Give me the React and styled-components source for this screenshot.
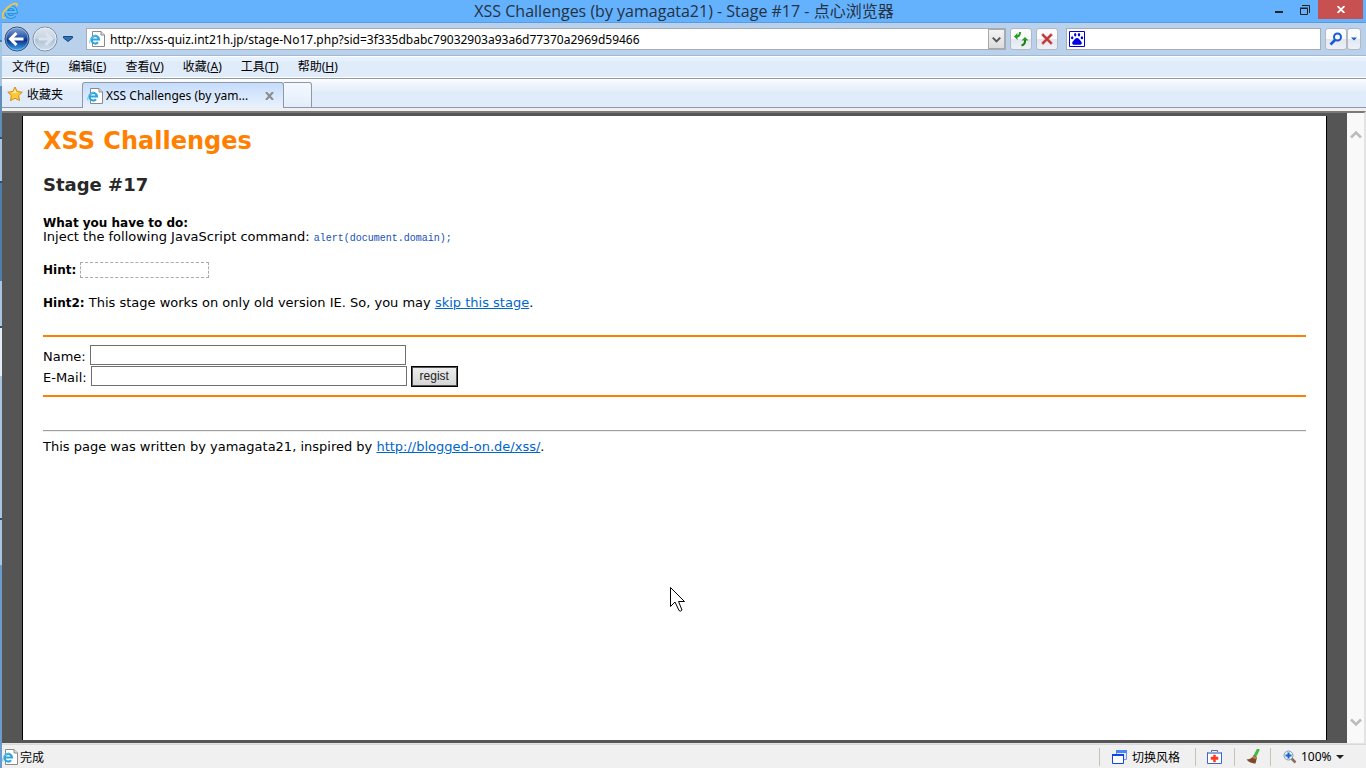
import React, { useState } from 'react';
import styled, { createGlobalStyle } from 'styled-components';

const GlobalStyle = createGlobalStyle`
  * {
    box-sizing: border-box;
  }

  body {
    margin: 0;
    font-family: "Noto Sans", "Noto Sans CJK SC", sans-serif;
    font-size: 12px;
    color: #000;
  }

  button, input {
    font-family: inherit;
    font-size: inherit;
    margin: 0;
    padding: 0;
  }

  svg {
    display: block;
    flex: none;
  }
`;

const Desktop = styled.div`
  display: grid;
  grid-template-columns: 2px 1fr;
  min-height: 100vh;
  background: #f0f0f0;
`;

const DesktopEdge = styled.div`
  background: linear-gradient(
    #64b1fd 0 40px, #4f7ba3 40px 42px, #a9c6e0 42px 86px, #5f8fb8 86px 137px,
    #31506e 137px 139px, #a9c6e0 139px 181px, #31506e 181px 183px,
    #4d7da8 183px 281px, #a9c6e0 281px 326px, #31506e 326px 328px,
    #e4edf5 328px 376px, #a9c6e0 376px 518px, #31506e 518px 520px,
    #a9c6e0 520px 565px, #6a9ccb 565px
  );
`;

const Window = styled.div`
  display: flex;
  flex-direction: column;
  min-width: 0;
`;

const TitleBar = styled.header`
  display: grid;
  grid-template-columns: 112px 1fr 112px;
  height: 23px;
  background: #64b1fd;
  border-bottom: 1px solid #5a9be0;
`;

const Title = styled.h1`
  margin: 0;
  font-family: "Open Sans", "Noto Sans CJK SC", sans-serif;
  font-size: 16px;
  font-weight: 400;
  line-height: 22px;
  text-align: center;
  color: #26323d;
  white-space: nowrap;
`;

const WindowButtons = styled.div`
  display: flex;
  align-items: flex-start;
  justify-content: flex-end;
  padding-right: 3px;
`;

const WindowButton = styled.button`
  display: flex;
  align-items: center;
  justify-content: center;
  width: ${props => props.$close ? '45px' : '26px'};
  height: 19px;
  border: 0;
  background: ${props => props.$close ? '#c75050' : 'transparent'};
`;

const NavBar = styled.div`
  display: flex;
  align-items: center;
  height: 33px;
  padding: 0 5px 0 2px;
  background: #b9d1ea;
  border-bottom: 1px solid #a3b9d1;
`;

const IconButton = styled.button`
  display: flex;
  align-items: center;
  justify-content: center;
  padding: 0;
  border: 0;
  background: transparent;
`;

const HistoryGroup = styled.div`
  display: flex;
  gap: 2px;
  align-items: center;
`;

const HistoryButton = styled(IconButton)`
  width: 16px;
  height: 24px;
  margin: 0 10px 0 2px;
`;

const FieldBox = styled.div`
  display: flex;
  align-items: center;
  height: 22px;
  min-width: 0;
  flex: ${props => props.$grow ? '1' : '0 0 255px'};
  background: #fff;
  border: 1px solid #a5acb5;
  padding-left: 2px;
`;

const FieldInput = styled.input`
  flex: 1;
  min-width: 0;
  height: 20px;
  margin-left: 5px;
  border: 0;
  outline: 0;
  background: transparent;
  font-size: 12px;
`;

const DropButton = styled(IconButton)`
  width: 17px;
  height: 20px;
  border: 1px solid #a9a9a9;
  background: linear-gradient(#f3f3f3, #dcdcdc);
`;

const ToolButton = styled(IconButton)`
  width: ${props => props.$narrow ? '14px' : '22px'};
  height: 22px;
  border: 1px solid #b3b8c2;
  border-radius: 3px;
  background: linear-gradient(#fafbfd 0 50%, #e1e6f0 50%, #eef1f7);
`;

const ToolGroup = styled.div`
  display: flex;
  gap: 4px;
  margin: 0 8px 0 4px;
`;

const SearchGroup = styled.div`
  display: flex;
  margin-left: 4px;
`;

const MenuBar = styled.nav`
  display: flex;
  gap: 19px;
  align-items: center;
  height: 23px;
  padding: 0 10px;
  background: linear-gradient(#fff 0 1px, #e6f2ff 1px 5px, #e0ecf9 5px 21px, #fff 21px);
  border-bottom: 1px solid #8f98a6;
`;

const MenuItem = styled.button`
  border: 0;
  background: transparent;
  line-height: 20px;
  white-space: nowrap;
`;

const TabRow = styled.div`
  display: flex;
  height: 29px;
  background: linear-gradient(#fff, #f1f6fe 4px, #e6eefa 12px, #e0ecf9 13px);
`;

const Favorites = styled.button`
  display: flex;
  align-items: center;
  gap: 4px;
  width: 80px;
  padding: 2px 0 0 5px;
  border: 0;
  border-bottom: 1px solid #8f98a6;
  background: transparent;
`;

const Tab = styled.div`
  display: flex;
  align-items: center;
  width: 202px;
  height: 26px;
  margin-top: 3px;
  padding: 0 9px 0 4px;
  border: 1px solid #8f98a6;
  border-bottom: 0;
  border-radius: 3px 3px 0 0;
  background: linear-gradient(#c5dcfb, #e6f0fd 90%);
`;

const TabTitle = styled.span`
  flex: 1;
  margin-left: 3px;
  overflow: hidden;
  text-overflow: ellipsis;
  white-space: nowrap;
`;

const NewTab = styled.button`
  width: 28px;
  height: 26px;
  margin-top: 3px;
  border: 1px solid #8f98a6;
  border-left: 0;
  border-radius: 0 3px 0 0;
  background: linear-gradient(#f4f8fe, #e3eefa);
`;

const TabRest = styled.div`
  flex: 1;
  border-bottom: 1px solid #8f98a6;
`;

const Viewport = styled.div`
  display: flex;
  flex: 1;
  margin-top: 3px;
  border-top: 2px solid #7a7a7a;
  border-right: 2px solid #e3e3e3;
  border-bottom: 1px solid #e3e3e3;
`;

const Backdrop = styled.div`
  flex: 1;
  display: flex;
  min-width: 0;
  padding: 3px 20px;
  background: #555;
`;

const Page = styled.main`
  flex: 1;
  min-width: 0;
  padding: 10px 20px;
  background: #fff;
  border: solid #000;
  border-width: 0 1px;
  font-family: "DejaVu Sans", sans-serif;
  font-size: 13px;
  line-height: 14px;
`;

const SiteTitle = styled.h1`
  margin: 0 0 16px;
  font-size: 24px;
  line-height: 30px;
  color: #ff8000;
`;

const StageTitle = styled.h2`
  margin: 0 0 18px;
  font-size: 18px;
  line-height: 26px;
  color: #282828;
`;

const Paragraph = styled.p`
  margin: 0 0 ${props => props.$last ? '25px' : '19px'};
`;

const Strong = styled.b`
  font-size: 12px;
`;

const Command = styled.span`
  font-family: "Liberation Mono", monospace;
  font-size: 10px;
  line-height: 10px;
  color: #1450b4;
`;

const HintBox = styled.span`
  display: inline-block;
  width: 129px;
  height: 16px;
  margin: -1px 0;
  border: 1px dashed #aaa;
  vertical-align: top;
`;

const Link = styled.a`
  color: #0066cc;
`;

const FormRule = styled.hr`
  margin: 0;
  border: 0;
  border-top: 2px solid #ff8000;
`;

const Form = styled.form`
  padding: 8px 0;
`;

const FormRow = styled.div`
  display: flex;
  align-items: center;
  gap: 4px;
  height: ${props => props.$first ? '20px' : '22px'};
`;

const Label = styled.label`
  padding-top: 3px;
`;

const TextField = styled.input`
  width: 316px;
  height: 20px;
  border: 1px solid #6f6f6f;
  padding: 0 3px;
  background: #fff;
`;

const SubmitButton = styled.button`
  width: 47px;
  height: 21px;
  border: 1px solid #000;
  box-shadow: inset 0 0 0 1px #555;
  background: linear-gradient(#eee, #d5d5d5);
  font-family: "Liberation Sans", sans-serif;
  font-size: 12px;
  line-height: 14px;
  color: #222;
`;

const FooterRule = styled.hr`
  margin: 33px 0 8px;
  border: 0;
  border-top: 1px solid #a0a0a0;
  border-bottom: 1px solid #eee;
`;

const ScrollBar = styled.div`
  display: flex;
  flex-direction: column;
  justify-content: space-between;
  width: 17px;
  padding: 13px 0;
  background: #f9f9f9;
`;

const ScrollButton = styled(IconButton)`
  width: 17px;
  height: 17px;
`;

const StatusBar = styled.footer`
  display: flex;
  align-items: center;
  height: 24px;
  border-top: 1px solid #d9d9d9;
  background: #f0f0f0;
`;

const StatusText = styled.div`
  display: flex;
  align-items: center;
  gap: 2px;
  flex: 1;
`;

const StatusItem = styled.button`
  display: flex;
  align-items: center;
  justify-content: ${props => props.$start ? 'flex-start' : 'center'};
  gap: 4px;
  width: ${props => props.$width};
  height: 18px;
  padding: 0 ${props => props.$start ? '12px' : '0'};
  border: 0;
  border-left: 1px solid #c8c4b4;
  background: transparent;
  white-space: nowrap;
`;

const Pointer = styled.svg`
  position: absolute;
  left: 670px;
  top: 587px;
  pointer-events: none;
`;

const IePageIcon = () => (
  <svg width="16" height="16" viewBox="0 0 16 16" fill="none">
    <path d="M3.5 .5h8.5l3.5 3.5v11.5h-12z" fill="#fff" stroke="#8a8a8a" />
    <path d="M12 .5v3.5h3.5" fill="#ddd" stroke="#8a8a8a" />
    <path d="M2.5 8.5h7.5a3.8 3.8 0 1 0-1 2.8" stroke="#2fa5dc" strokeWidth="2.2" />
    <path d="M1 12.5C-.5 10 3 5 7 4" stroke="#67c5eb" />
  </svg>
);

const IeIcon = () => (
  <svg width="17" height="20" viewBox="0 0 17 20" fill="none">
    <path d="M4.500 12h9.500a5 5 0 1 0-1.200 3.300" stroke="#1688d6" strokeWidth="3.4" />
    <path d="M4.500 12h9.500a5 5 0 1 0-1.200 3.300" stroke="#68bdf6" strokeWidth="1.8" />
    <path d="M3.500 18C-1 19-.4 13 5 8S16.500 2 14.500 6" stroke="#f3c64b" strokeWidth="1.8" />
  </svg>
);

const BackIcon = () => (
  <svg width="26" height="26" viewBox="0 0 26 26">
    <defs>
      <linearGradient id="back" x2="0" y2="1">
        <stop stopColor="#8aa8d8" />
        <stop offset=".4" stopColor="#2f5cae" />
        <stop offset=".55" stopColor="#0a2f86" />
        <stop offset="1" stopColor="#3fb0fa" />
      </linearGradient>
    </defs>
    <circle cx="13" cy="13" r="12" fill="url(#back)" stroke="#35527e" />
    <circle cx="13" cy="13" r="11" fill="none" stroke="#b9d4f2" strokeOpacity=".5" />
    <path d="M12.500 7 6.500 13l6 6M7.500 13h12" fill="none" stroke="#fff" strokeWidth="3" />
  </svg>
);

const ForwardIcon = () => (
  <svg width="26" height="26" viewBox="0 0 26 26">
    <defs>
      <linearGradient id="forward" x2="0" y2="1">
        <stop stopColor="#dfe8f2" />
        <stop offset=".48" stopColor="#c6d3e2" />
        <stop offset=".52" stopColor="#b0c2d6" />
        <stop offset="1" stopColor="#d2e0ef" />
      </linearGradient>
    </defs>
    <circle cx="13" cy="13" r="12" fill="url(#forward)" stroke="#7e8b9c" />
    <circle cx="13" cy="13" r="11" fill="none" stroke="#e6eef7" />
    <path d="m13.500 7 6 6-6 6M18.500 13h-12" fill="none" stroke="#dbe4ee" strokeWidth="3" />
  </svg>
);

const StarIcon = () => (
  <svg width="16" height="16" viewBox="0 0 16 16">
    <path
      d="m8 1 2.200 4.500 5 .7-3.600 3.400.9 5L8 12.200l-4.500 2.400.9-5L.8 6.200l5-.7z"
      fill="#ffc935" stroke="#d58a14" strokeLinejoin="round"
    />
    <path d="m8 3 1.300 3.500 3 .5H4l2.500-.7z" fill="#fff0a8" />
  </svg>
);

const PawIcon = () => (
  <svg width="16" height="16" viewBox="0 0 16 16" fill="#0000e6">
    <path d="M.5.5h15v15H.5z" fill="#fff" stroke="#0000e6" />
    <ellipse cx="6.200" cy="3.800" rx="1.200" ry="1.700" />
    <ellipse cx="10" cy="3.800" rx="1.200" ry="1.700" />
    <ellipse cx="3.200" cy="6.800" rx="1.200" ry="1.500" />
    <ellipse cx="12.900" cy="6.800" rx="1.200" ry="1.500" />
    <path d="M8 7c2 0 2.200 1.500 3.500 2.800 2 1.700 1.500 4-.5 4H5c-2 0-2.500-2.300-.5-4C5.800 8.500 6 7 8 7z" />
  </svg>
);

const RefreshIcon = () => (
  <svg width="16" height="16" viewBox="0 0 16 16">
    <g fill="#2a9a1e">
      <path d="M1 5.500 4.500 2v7z" />
      <path d="M8.500 8.500h7L12 5z" transform="translate(0 1)" />
    </g>
    <path d="M3.500 5.500Q7 5.500 7 1" fill="none" stroke="#2a9a1e" strokeWidth="2" transform="translate(0 0)" />
    <path d="M12 9v1.500q0 3-3.500 4" fill="none" stroke="#1c7f14" strokeWidth="2" />
  </svg>
);

const StopIcon = () => (
  <svg width="12" height="12" viewBox="0 0 12 12" fill="none">
    <path d="m1 1 10 10M11 1 1 11" stroke="#e08a8a" strokeWidth="3" />
    <path d="m1.500 1.500 9 9M10.500 1.500l-9 9" stroke="#bf3434" strokeWidth="1.800" />
  </svg>
);

const SearchIcon = () => (
  <svg width="14" height="14" viewBox="0 0 14 14" fill="none" stroke="#1c5ad2">
    <circle cx="8.500" cy="5" r="3.500" strokeWidth="2" />
    <path d="m6 8-4.500 4.500" strokeWidth="2.600" />
  </svg>
);

const Triangle = ({ color, width = 8 }) => (
  <svg width={width} height="4" viewBox="0 0 8 4">
    <path d="M0 0h8L4 4z" fill={color} />
  </svg>
);

const Chevron = ({ up, color = '#bcbcbc', size = 12 }) => (
  <svg width={size} height={size} viewBox="0 0 12 12" fill="none">
    <path d={up ? 'm1 8.500 5-5 5 5' : 'm1 3.500 5 5 5-5'} stroke={color} strokeWidth="2.600" />
  </svg>
);

const StyleIcon = () => (
  <svg width="16" height="14" viewBox="0 0 16 14">
    <path d="M4.500.5h10v9h-10z" fill="#dfe9ff" stroke="#6f96ea" />
    <path d="M4 0h11v3H4z" fill="#4b86f2" />
    <path d="M.5 4.500h11v9H.5z" fill="#fff" stroke="#1544e0" />
    <path d="M0 4h12v2H0z" fill="#1544e0" />
  </svg>
);

const AidIcon = () => (
  <svg width="16" height="14" viewBox="0 0 16 14">
    <path d="M4.500 2V.5h6V2" fill="none" stroke="#5a6b94" />
    <path d="M.5 2.500h14v11H.5z" fill="#fff" stroke="#3c66cc" />
    <path d="M1 2h13v2H1z" fill="#8ca6d8" />
    <path d="M6.500 5h2v2h2.500v2.500H8.500V12h-2V9.500H4V7h2.500z" fill="#ff3a1c" stroke="#ff3a1c" strokeWidth=".5" />
  </svg>
);

const BroomIcon = () => (
  <svg width="14" height="15" viewBox="0 0 14 15">
    <path d="m12 1-3 6" stroke="#3fbb3f" strokeWidth="3" strokeLinecap="round" />
    <path d="M8 6 11 8.500 9.500 14.500C6 14.500 2.500 13 .5 10.500 3 10.500 6.500 9 8 6z" fill="#7d4a2a" />
    <path d="m7.500 6.500 3.500 2-.5 2L6 8.500z" fill="#b7885e" />
  </svg>
);

const ZoomIcon = () => (
  <svg width="14" height="14" viewBox="0 0 14 14" fill="none">
    <path d="m8 8 4.500 4.500" stroke="#8c6b58" strokeWidth="2.500" />
    <circle cx="5.500" cy="5.500" r="4.500" fill="#e3f1ff" stroke="#8198b5" />
    <path d="M5.500 2.500v6M2.500 5.500h6" stroke="#1b63c4" strokeWidth="2" />
  </svg>
);

const menus = [
  { label: '文件', hotkey: 'F' },
  { label: '编辑', hotkey: 'E' },
  { label: '查看', hotkey: 'V' },
  { label: '收藏', hotkey: 'A' },
  { label: '工具', hotkey: 'T' },
  { label: '帮助', hotkey: 'H' },
];

const BrowserBar = () => {
  const [url, setUrl] = useState('http://xss-quiz.int21h.jp/stage-No17.php?sid=3f335dbabc79032903a93a6d77370a2969d59466');

  return (
    <NavBar>
      <HistoryGroup>
        <IconButton aria-label="Back"><BackIcon /></IconButton>
        <IconButton aria-label="Forward"><ForwardIcon /></IconButton>
      </HistoryGroup>
      <HistoryButton aria-label="History">
        <svg width="10" height="6" viewBox="0 0 10 6">
          <path d="M.5.5h9V2L5 5.500.5 2z" fill="#2e75b5" stroke="#1c4a80" />
        </svg>
      </HistoryButton>
      <FieldBox $grow>
        <IePageIcon />
        <FieldInput aria-label="Address" value={url} onChange={(e) => setUrl(e.target.value)} />
        <DropButton aria-label="Addresses"><Chevron color="#555" size={9} /></DropButton>
      </FieldBox>
      <ToolGroup>
        <ToolButton aria-label="Refresh"><RefreshIcon /></ToolButton>
        <ToolButton aria-label="Stop"><StopIcon /></ToolButton>
      </ToolGroup>
      <FieldBox>
        <PawIcon />
        <FieldInput aria-label="Search" />
      </FieldBox>
      <SearchGroup>
        <ToolButton aria-label="Go"><SearchIcon /></ToolButton>
        <ToolButton $narrow aria-label="Search options"><Triangle color="#1c5ad2" width={6} /></ToolButton>
      </SearchGroup>
    </NavBar>
  );
};

const StagePage = () => (
  <Page>
    <SiteTitle>XSS Challenges</SiteTitle>
    <StageTitle>Stage #17</StageTitle>
    <Paragraph>
      <Strong>What you have to do:</Strong><br />
      Inject the following JavaScript command: <Command>alert(document.domain);</Command>
    </Paragraph>
    <Paragraph><Strong>Hint:</Strong> <HintBox /></Paragraph>
    <Paragraph $last>
      <Strong>Hint2:</Strong> This stage works on only old version IE. So, you may <Link href="#skip">skip this stage</Link>.
    </Paragraph>
    <FormRule />
    <Form onSubmit={(e) => e.preventDefault()}>
      <FormRow $first>
        <Label htmlFor="name">Name:</Label>
        <TextField id="name" type="text" />
      </FormRow>
      <FormRow>
        <Label htmlFor="email">E-Mail:</Label>
        <TextField id="email" type="text" />
        <SubmitButton type="submit">regist</SubmitButton>
      </FormRow>
    </Form>
    <FormRule />
    <FooterRule />
    This page was written by yamagata21, inspired by <Link href="#xss">http://blogged-on.de/xss/</Link>.
  </Page>
);

const App = () => (
  <>
    <GlobalStyle />
    <Desktop>
      <DesktopEdge />
      <Window>
        <TitleBar>
          <IeIcon />
          <Title>XSS Challenges (by yamagata21) - Stage #17 - 点心浏览器</Title>
          <WindowButtons>
            <WindowButton aria-label="Minimize">
              <svg width="8" height="8"><path d="M0 5h8v2H0z" fill="#222" /></svg>
            </WindowButton>
            <WindowButton aria-label="Restore">
              <svg width="10" height="10" fill="none" stroke="#222">
                <path d="M2 .5h7.500V8M.5 3.500h7v6h-7zM0 3h8" />
              </svg>
            </WindowButton>
            <WindowButton $close aria-label="Close">
              <svg width="8" height="7" fill="none" stroke="#fff" strokeWidth="1.800">
                <path d="m.5 0 7 7M7.500 0l-7 7" />
              </svg>
            </WindowButton>
          </WindowButtons>
        </TitleBar>
        <BrowserBar />
        <MenuBar>
          {menus.map((menu) => (
            <MenuItem key={menu.hotkey}>{menu.label}(<u>{menu.hotkey}</u>)</MenuItem>
          ))}
        </MenuBar>
        <TabRow>
          <Favorites><StarIcon />收藏夹</Favorites>
          <Tab>
            <IePageIcon />
            <TabTitle>XSS Challenges (by yam...</TabTitle>
            <IconButton aria-label="Close tab">
              <svg width="9" height="8" fill="none" stroke="#8a8a8a" strokeWidth="2">
                <path d="m1 0 7 8M8 0 1 8" />
              </svg>
            </IconButton>
          </Tab>
          <NewTab aria-label="New tab" />
          <TabRest />
        </TabRow>
        <Viewport>
          <Backdrop><StagePage /></Backdrop>
          <ScrollBar>
            <ScrollButton aria-label="Scroll up"><Chevron up /></ScrollButton>
            <ScrollButton aria-label="Scroll down"><Chevron /></ScrollButton>
          </ScrollBar>
        </Viewport>
        <StatusBar>
          <StatusText><IePageIcon />完成</StatusText>
          <StatusItem $start $width="96px"><StyleIcon />切换风格</StatusItem>
          <StatusItem $width="39px" aria-label="Repair"><AidIcon /></StatusItem>
          <StatusItem $width="36px" aria-label="Clean up"><BroomIcon /></StatusItem>
          <StatusItem $start $width="96px"><ZoomIcon />100%<Triangle color="#222" /></StatusItem>
        </StatusBar>
      </Window>
    </Desktop>
    <Pointer width="16" height="27" viewBox="0 0 16 27">
      <path
        d="M.5.5v19l4.500-4.500 4 8.500q1.500 1.500 3-.5L8.500 14.500h6z"
        fill="#fff" stroke="#000"
      />
    </Pointer>
  </>
);

export default App;
